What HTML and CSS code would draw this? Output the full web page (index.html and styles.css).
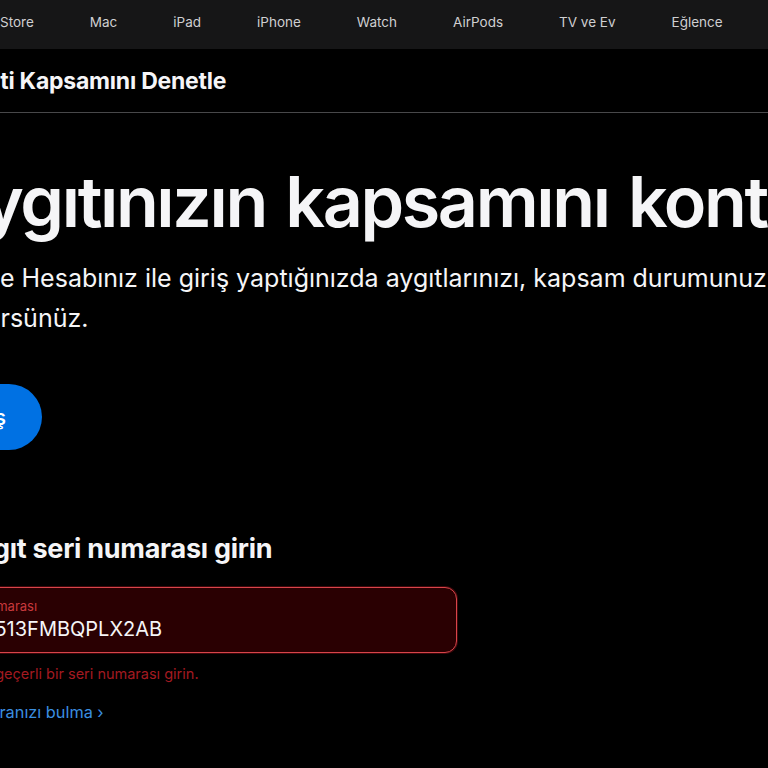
FILE: index.html
```html
<!DOCTYPE html>
<html lang="tr">
  <head>
    <meta name="viewport" content="width=device-width,initial-scale=1.0">
    <title>Kapsamı Denetle</title>
    <link rel="stylesheet" href="styles.css">
  </head>
  <body>
    <nav class="globalnav">
      <ul class="globalnav-list">
        <li>Store</li>
        <li>Mac</li>
        <li>iPad</li>
        <li>iPhone</li>
        <li>Watch</li>
        <li>AirPods</li>
        <li>TV ve Ev</li>
        <li>Eğlence</li>
      </ul>
    </nav>
    <div class="subnav">
      <div class="page">
        <h2 class="subnav-title">Garanti Kapsamını Denetle</h2>
      </div>
    </div>
    <main class="page">
      <h1 class="hero-title">Aygıtınızın kapsamını kontrol edin</h1>
      <p class="hero-copy">Apple Hesabınız ile giriş yaptığınızda aygıtlarınızı, kapsam durumunuzu ve daha fazlasını<br>görürsünüz.</p>
      <button class="signin-btn">Giriş</button>

      <h3 class="serial-title">Bir aygıt seri numarası girin</h3>
      <div class="field is-error">
        <label class="field-label" for="serial">Seri numarası</label>
        <input class="field-input" id="serial" value="C02513FMBQPLX2AB">
      </div>
      <p class="field-error">Lütfen geçerli bir seri numarası girin.</p>
      <a class="find-link" href="#">Seri numaranızı bulma ›</a>
    </main>
  </body>
</html>
```
FILE: styles.css
```css
body {
  margin: 0;
  background: #000;
  color: #f5f5f7;
  font-family: Inter, "Noto Sans", sans-serif;
  overflow: hidden;
}

.globalnav { background: #161617; height: 49px; }
.globalnav-list {
  list-style: none;
  margin: 0;
  padding: 0 0 5px;
  box-sizing: border-box;
  height: 100%;
  display: flex;
  align-items: center;
  gap: 56px;
  white-space: nowrap;
  font-size: 13.5px;
  color: #cfcfd1;
}

.page { margin-left: -52px; }

.subnav {
  height: 63px;
  border-bottom: 1px solid #48484a;
  display: flex;
  align-items: center;
}
.subnav-title {
  margin: 0 0 0 -14px;
  font-size: 23px;
  font-weight: 700;
  letter-spacing: -0.01em;
  white-space: nowrap;
}

.hero-title {
  margin: 49px 0 0 -9px;
  font-size: 70px;
  line-height: 80px;
  font-weight: 600;
  letter-spacing: -0.034em;
  word-spacing: 4px;
  white-space: nowrap;
}
.hero-copy {
  margin: 16px 0 0 -2px;
  font-size: 25px;
  line-height: 40px;
  white-space: nowrap;
}

.signin-btn {
  display: block;
  margin: 46px 0 0 -26px;
  height: 66px;
  padding: 0 36px;
  border: none;
  border-radius: 33px;
  background: #0071e3;
  color: #fff;
  font-family: inherit;
  font-size: 22px;
  font-weight: 500;
}

.serial-title {
  margin: 84px 0 0 -27px;
  font-size: 27px;
  line-height: 30px;
  font-weight: 700;
  letter-spacing: -0.01em;
  white-space: nowrap;
}

.field {
  margin-top: 23px;
  width: 509px;
  height: 66px;
  box-sizing: border-box;
  padding: 10px 16px 0 4px;
  border: 1px solid #d8444a;
  border-radius: 12px;
  background: #2a0002;
  box-shadow: 0 0 0 1px rgba(170, 20, 30, 0.35);
  display: flex;
  flex-direction: column;
}
.field-label {
  font-size: 13px;
  line-height: 17px;
  color: #c8393d;
}
.field-input {
  margin-top: 2px;
  margin-left: 2px;
  padding: 0;
  border: none;
  background: transparent;
  color: #f5f5f7;
  font-family: inherit;
  font-size: 20px;
  line-height: 25px;
  outline: none;
}

.field-error {
  margin: 12px 0 0;
  font-size: 14.5px;
  line-height: 18px;
  color: #a31a20;
  white-space: nowrap;
}
.find-link {
  display: block;
  margin: 18px 0 0 -26px;
  font-size: 16.3px;
  line-height: 22px;
  color: #3b8fe0;
  text-decoration: none;
  white-space: nowrap;
}
```
